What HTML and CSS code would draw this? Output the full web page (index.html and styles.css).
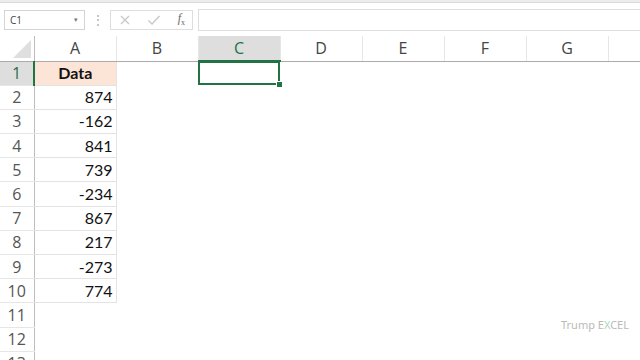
FILE: index.html
```html
<!DOCTYPE html>
<html lang="en">
<head>
  <meta charset="UTF-8">
  <title>Book1 - Excel</title>
  <link rel="stylesheet" href="styles.css">
</head>
<body>
  <div class="topline"></div>
  <div class="formula-bar">
    <div class="name-box"><span>C1</span><span class="caret">&#9662;</span></div>
    <div class="grip">&#8942;</div>
    <div class="fx-box">
      <svg width="12" height="12" viewBox="0 0 12 12"><path d="M2 2 L10 10 M10 2 L2 10" stroke="#c8c8c8" stroke-width="1.3" fill="none"/></svg>
      <svg width="14" height="12" viewBox="0 0 14 12"><path d="M1.5 6.5 L5 10 L12.5 2" stroke="#c8c8c8" stroke-width="1.4" fill="none"/></svg>
      <span class="fx"><i>f</i><sub>x</sub></span>
    </div>
    <div class="formula-input"></div>
  </div>

  <table class="sheet">
    <colgroup>
      <col class="rh"><col class="c"><col class="c"><col class="c"><col class="c"><col class="c"><col class="c"><col class="c"><col>
    </colgroup>
    <thead>
      <tr>
        <th class="corner"><span class="tri"></span></th>
        <th>A</th><th>B</th><th class="sel">C</th><th>D</th><th>E</th><th>F</th><th>G</th><th class="last"></th>
      </tr>
    </thead>
    <tbody>
      <tr><th class="sel">1</th><td class="data head">Data</td><td></td><td class="active"></td><td></td><td></td><td></td><td></td><td></td></tr>
      <tr><th>2</th><td class="data">874</td><td></td><td></td><td></td><td></td><td></td><td></td><td></td></tr>
      <tr><th>3</th><td class="data">-162</td><td></td><td></td><td></td><td></td><td></td><td></td><td></td></tr>
      <tr><th>4</th><td class="data">841</td><td></td><td></td><td></td><td></td><td></td><td></td><td></td></tr>
      <tr><th>5</th><td class="data">739</td><td></td><td></td><td></td><td></td><td></td><td></td><td></td></tr>
      <tr><th>6</th><td class="data">-234</td><td></td><td></td><td></td><td></td><td></td><td></td><td></td></tr>
      <tr><th>7</th><td class="data">867</td><td></td><td></td><td></td><td></td><td></td><td></td><td></td></tr>
      <tr><th>8</th><td class="data">217</td><td></td><td></td><td></td><td></td><td></td><td></td><td></td></tr>
      <tr><th>9</th><td class="data">-273</td><td></td><td></td><td></td><td></td><td></td><td></td><td></td></tr>
      <tr><th>10</th><td class="data">774</td><td></td><td></td><td></td><td></td><td></td><td></td><td></td></tr>
      <tr><th>11</th><td></td><td></td><td></td><td></td><td></td><td></td><td></td><td></td></tr>
      <tr><th>12</th><td></td><td></td><td></td><td></td><td></td><td></td><td></td><td></td></tr>
      <tr><th>13</th><td></td><td></td><td></td><td></td><td></td><td></td><td></td><td></td></tr>
    </tbody>
  </table>

  <div class="watermark">Trump E<span class="x">X</span>CEL</div>
</body>
</html>
```

FILE: styles.css
```css
html, body { margin: 0; padding: 0; background: #fff; overflow: hidden; }
body { width: 640px; height: 360px; position: relative; font-family: "Open Sans", sans-serif; color: #333; }

.topline { height: 2px; background: #ececec; border-bottom: 1px solid #dadada; }

.formula-bar { display: flex; align-items: center; height: 33px; padding-left: 4px; background: #fff; }
.name-box { width: 81px; height: 20px; border: 1px solid #d4d4d4; display: flex; align-items: center; justify-content: space-between; padding: 0 6px 0 5px; box-sizing: border-box; font-size: 10px; color: #444; }
.name-box .caret { font-size: 7px; color: #777; }
.grip { width: 25px; text-align: center; color: #aaa; font-size: 12px; }
.fx-box { width: 83px; height: 20px; box-sizing: border-box; border: 1px solid #dedede; display: flex; align-items: center; justify-content: space-between; padding: 0 7px 0 8px; }
.fx { font-family: "Liberation Serif", serif; font-size: 12px; color: #666; }
.fx sub { font-size: 8px; }
.formula-input { flex: 1; height: 20px; margin-left: 5px; border: 1px solid #dedede; border-right: none; }

.sheet { border-collapse: collapse; table-layout: fixed; width: 700px; }
.sheet col.rh { width: 34px; }
.sheet col.c { width: 82px; }
.sheet thead th { height: 24px; font-weight: normal; font-size: 16px; color: #444; border-right: 1px solid #e6e6e6; border-bottom: 1px solid #ababab; padding: 0; }
.sheet thead th.sel { background: #dedede; color: #217346; border-bottom: 2px solid #217346; }
.sheet thead th.corner { border-right: 1px solid #bdbdbd; position: relative; }
.tri { position: absolute; right: 3px; bottom: 3px; width: 0; height: 0; border-left: 18px solid transparent; border-bottom: 18px solid #dfdfdf; }
.sheet tbody tr { height: 24.2px; }
.sheet tbody th { font-weight: normal; font-size: 16px; line-height: 20px; color: #555; border-right: 1px solid #bdbdbd; border-bottom: 1px solid #e6e6e6; padding: 0; text-align: center; }
.sheet tbody th.sel { background: #dedede; color: #217346; border-right: 2px solid #217346; }
.sheet td { padding: 0 3px; line-height: 20px; font-family: Lato, "Liberation Sans", sans-serif; font-size: 16px; color: #111; }
.sheet td.data { text-align: right; border: 1px solid #e3e3e3; }
.sheet td.head { background: #fce4d6; text-align: center; font-weight: bold; }
.sheet td.active { outline: 2px solid #217346; outline-offset: -2px; position: relative; }
.sheet td.active::after { content: ""; position: absolute; right: -3px; bottom: -3px; width: 5px; height: 5px; background: #217346; border: 1px solid #fff; }

.watermark { position: absolute; left: 561px; top: 317px; font-family: "Noto Sans", sans-serif; font-size: 11px; color: #b9b9b9; }
.watermark .x { color: #a8d8b8; }
```
